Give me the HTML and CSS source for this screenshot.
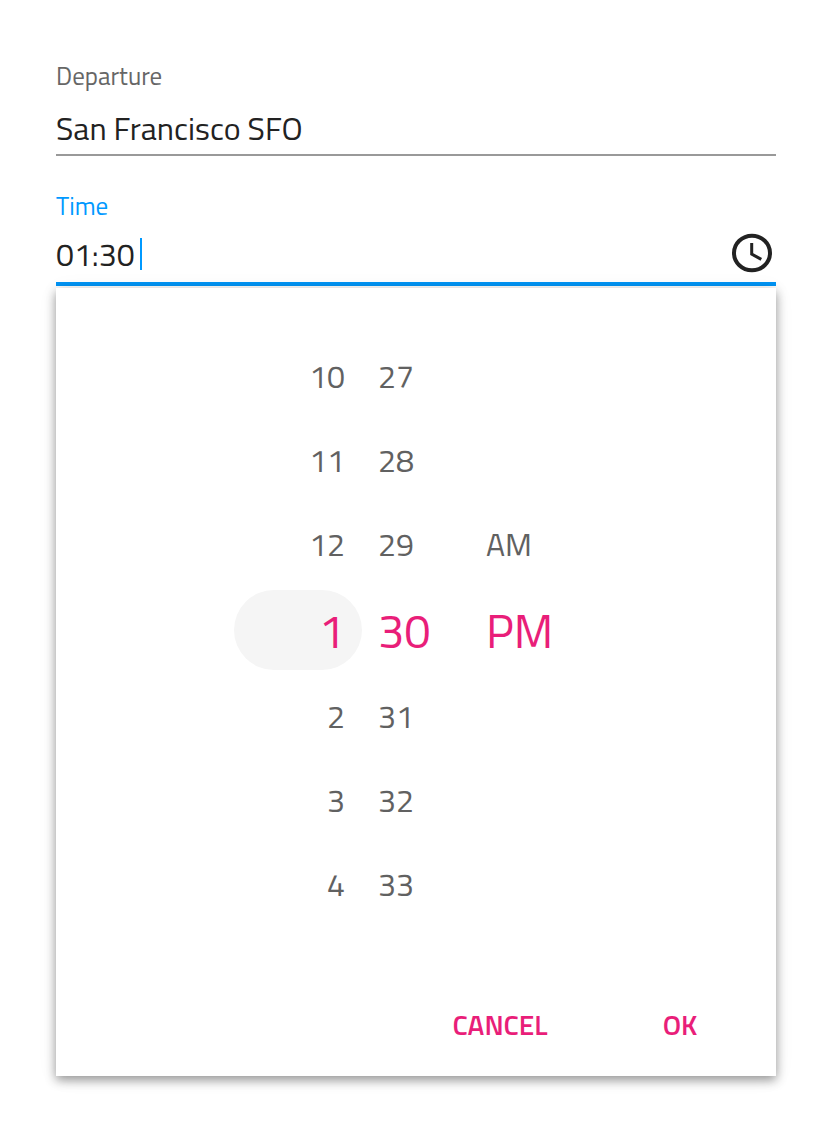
FILE: index.html
```html
<!DOCTYPE html>
<html lang="en">
<head>
<meta charset="utf-8">
<meta name="viewport" content="width=device-width, initial-scale=1">
<title>Departure time</title>
<link rel="stylesheet" href="styles.css">
</head>
<body>
<form class="form">
  <div class="field">
    <label class="field-label" for="departure">Departure</label>
    <div class="field-control">
      <input class="field-input" id="departure" type="text" value="San Francisco SFO">
    </div>
  </div>
  <div class="field field-active">
    <label class="field-label" for="time">Time</label>
    <div class="field-control">
      <input class="field-input time-input" id="time" type="text" value="01:30">
      <span class="caret"></span>
      <button class="clock" type="button" aria-label="Choose time">
        <svg viewBox="0 0 48 48" width="48" height="48" fill="none" stroke="#222" stroke-width="4">
          <ellipse cx="24" cy="23" rx="18" ry="17.3"/>
          <path d="M23.7 13v11l9.6 5.4" stroke-width="3"/>
        </svg>
      </button>
    </div>
  </div>
  <div class="picker">
    <div class="wheels">
      <div class="wheel wheel-hours">
        <button class="item" type="button">10</button>
        <button class="item" type="button">11</button>
        <button class="item" type="button">12</button>
        <button class="item item-selected item-focused" type="button">1</button>
        <button class="item" type="button">2</button>
        <button class="item" type="button">3</button>
        <button class="item" type="button">4</button>
      </div>
      <div class="wheel">
        <button class="item" type="button">27</button>
        <button class="item" type="button">28</button>
        <button class="item" type="button">29</button>
        <button class="item item-selected" type="button">30</button>
        <button class="item" type="button">31</button>
        <button class="item" type="button">32</button>
        <button class="item" type="button">33</button>
      </div>
      <div class="wheel wheel-period">
        <button class="item" type="button">AM</button>
        <button class="item item-selected" type="button">PM</button>
      </div>
    </div>
    <div class="actions">
      <button class="action" type="button">CANCEL</button>
      <button class="action" type="button">OK</button>
    </div>
  </div>
</form>
</body>
</html>
```
FILE: styles.css
```css
* {
  box-sizing: border-box;
}

body {
  margin: 0;
  background: #fff;
  color: #222;
  font-family: "Titillium Web", Roboto, sans-serif;
}

button,
input {
  padding: 0;
  border: 0;
  background: none;
  color: inherit;
  font: inherit;
}

button {
  cursor: pointer;
}

.form {
  padding: 60px 56px 56px;
}

.field {
  margin-bottom: 34px;
}

.field-label {
  display: block;
  color: #666;
  font-size: 25px;
  line-height: 32px;
}

.field-control {
  display: flex;
  align-items: center;
  height: 64px;
  padding-top: 10px;
  border-bottom: 2px solid #999;
}

.field-input {
  flex: 1;
  min-width: 0;
  height: 48px;
  outline: 0;
  font-size: 32px;
}

.field-active {
  margin-bottom: 2px;
}

.field-active .field-label {
  color: #0099ff;
}

.field-active .field-control {
  padding-top: 4px;
  border-bottom: 4px solid #0095f6;
}

.time-input {
  flex: none;
  width: 84px;
}

.caret {
  width: 2px;
  height: 32px;
  background: #0099ff;
}

.clock {
  height: 48px;
  margin-left: auto;
}

.clock svg {
  display: block;
}

.picker {
  padding: 48px 8px 16px;
  background: #fff;
  box-shadow: 0 4px 10px rgba(0, 0, 0, 0.4), 0 2px 20px rgba(0, 0, 0, 0.06);
}

.wheels {
  display: grid;
  grid-template-columns: 128px 108px 128px;
  justify-content: center;
}

.wheel {
  display: flex;
  flex-direction: column;
}

.wheel-period {
  padding-top: 168px;
}

.item {
  height: 84px;
  padding: 0 16px 4px;
  color: #616161;
  font-size: 32px;
  line-height: 80px;
  text-align: left;
}

.wheel-hours .item {
  padding-right: 17px;
  text-align: right;
}

.item-selected {
  height: 80px;
  margin: 2px 0 6px;
  padding-top: 2px;
  padding-bottom: 0;
  border-radius: 40px;
  color: #e91e79;
  font-size: 47px;
  line-height: 78px;
}

.item-focused {
  background: #f5f5f5;
}

.actions {
  display: flex;
  justify-content: flex-end;
  gap: 4px;
  margin-top: 60px;
}

.action {
  width: 176px;
  height: 72px;
  color: #e91e79;
  font-size: 28px;
  font-weight: 600;
}
```
